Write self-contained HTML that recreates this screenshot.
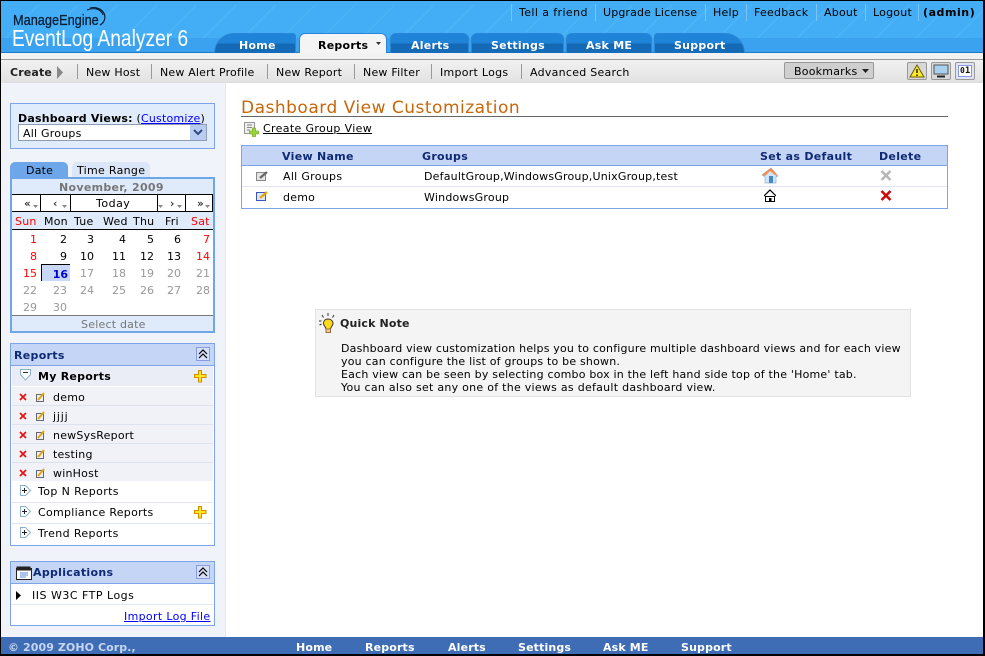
<!DOCTYPE html>
<html><head><meta charset="utf-8"><title>EventLog Analyzer</title>
<style>
html,body{margin:0;padding:0;background:#fff}
#p{position:relative;width:985px;height:656px;overflow:hidden;background:#fff;font:11px "DejaVu Sans","Liberation Sans",sans-serif;color:#000;letter-spacing:.22px}
#p div,#p span,#p a,#p svg{position:absolute;white-space:nowrap}
#p a{color:#00f;text-decoration:underline}
.t{line-height:14px;height:14px;margin-top:1px}
.b{font-weight:bold;letter-spacing:.15px}
.tab{top:33px;height:20px;background:linear-gradient(#1f84d8,#1f84d8 50%,#1468b4 51%,#156cb8);border-radius:6px 6px 0 0;border:1px solid #2a86d4;border-bottom:0;box-sizing:border-box}
.tl{top:39px;color:#fff;font-weight:bold;line-height:14px;letter-spacing:.25px}
.sep{width:1px;background:#999}
.hs{width:1px;top:4px;height:17px;background:#7cc4f6}
.pn{background:#fff;border:1px solid #7ea4e8;box-sizing:border-box}
.hd{background:#c4d5f5}
.nv{color:#0f2a75;font-weight:bold;letter-spacing:.3px}
.cal{line-height:14px;text-align:right;width:24px;margin-top:1px;letter-spacing:0}
.g{color:#999}.r{color:#f00}
.foot{top:641px;color:#fff;font-weight:bold;line-height:14px;letter-spacing:.15px}
</style></head><body><div id="p">

<!-- header -->
<div style="left:0;top:0;width:985px;height:53px;background:#43aef6"></div>
<div style="left:0;top:5px;width:985px;height:33px;background:repeating-linear-gradient(135deg,#43aef6 0 26px,#4bb3f7 26px 28px)"></div>
<div style="left:0;top:38px;width:985px;height:15px;background:#3aa2ee"></div>
<div style="left:0;top:52px;width:985px;height:1px;background:#1b7bcb"></div>
<div style="left:0;top:53px;width:985px;height:6px;background:#f2f2f2"></div>
<div style="left:0;top:59px;width:985px;height:1px;background:#9a9a9a"></div>
<div style="left:0;top:60px;width:985px;height:23px;background:linear-gradient(#f1f1f1,#e2e2e2)"></div>
<div style="left:0;top:82px;width:985px;height:1px;background:#dcdcdc"></div>

<span style="left:13px;top:12px;font:15px/18px 'Liberation Sans',sans-serif;letter-spacing:0;color:#0a1f38;transform:scaleX(.85);transform-origin:0 0;-webkit-text-stroke:.3px #0a1f38">ManageEngine</span>
<svg style="left:86px;top:6px" width="22" height="22" viewBox="0 0 22 22" fill="none" stroke="#0a1f38"><path d="M1 4C8 1 15 3 17 9" stroke-width="1"/><path d="M4 2C11 0 18 4 19 11" stroke-width="1"/><path d="M10 2C16 3 21 8 18 15 17 17 16 18 14 19" stroke-width="1.2"/></svg>
<span style="left:12px;top:25px;font:23px/27px 'Liberation Sans',sans-serif;letter-spacing:0;color:#fff;transform:scaleX(.835);transform-origin:0 0">EventLog Analyzer 6</span>

<div class="hs" style="left:511px"></div><div class="hs" style="left:595px"></div><div class="hs" style="left:705px"></div><div class="hs" style="left:746px"></div><div class="hs" style="left:816px"></div><div class="hs" style="left:865px"></div><div class="hs" style="left:918px"></div>
<span class="t" style="left:519px;top:5px;letter-spacing:.4px">Tell a friend</span>
<span class="t" style="left:603px;top:5px;letter-spacing:.14px">Upgrade License</span>
<span class="t" style="left:713px;top:5px">Help</span>
<span class="t" style="left:754px;top:5px;letter-spacing:.25px">Feedback</span>
<span class="t" style="left:824px;top:5px">About</span>
<span class="t" style="left:873px;top:5px">Logout</span>
<span class="t b" style="left:923px;top:5px;letter-spacing:.55px">(admin)</span>

<!-- tabs -->
<div class="tab" style="left:214px;width:82px;border-radius:36px 6px 0 0"></div>
<div class="tab" style="left:299px;width:88px;background:#f4f4f4;border-color:#2a86d4"></div>
<div class="tab" style="left:390px;width:79px"></div>
<div class="tab" style="left:471px;width:93px"></div>
<div class="tab" style="left:566px;width:86px"></div>
<div class="tab" style="left:654px;width:91px;border-radius:6px 36px 0 0"></div>
<span class="tl" style="left:239px">Home</span>
<span class="tl" style="left:318px;color:#000">Reports</span>
<svg style="left:376px;top:42px" width="6" height="4"><path d="M0 0h5L2.500 3z" fill="#333"/></svg>
<span class="tl" style="left:411px">Alerts</span>
<span class="tl" style="left:491px">Settings</span>
<span class="tl" style="left:586px">Ask ME</span>
<span class="tl" style="left:674px">Support</span>

<!-- toolbar -->
<span class="t b" style="left:10px;top:65px;color:#222">Create</span>
<svg style="left:57px;top:66px" width="7" height="13"><path d="M0 0L6 6.500 0 13z" fill="#888"/></svg>
<div class="sep" style="left:77px;top:64px;height:15px"></div>
<div class="sep" style="left:151px;top:64px;height:15px"></div>
<div class="sep" style="left:267px;top:64px;height:15px"></div>
<div class="sep" style="left:354px;top:64px;height:15px"></div>
<div class="sep" style="left:431px;top:64px;height:15px"></div>
<div class="sep" style="left:521px;top:64px;height:15px"></div>
<span class="t" style="left:86px;top:65px">New Host</span>
<span class="t" style="left:160px;top:65px;letter-spacing:.18px">New Alert Profile</span>
<span class="t" style="left:276px;top:65px">New Report</span>
<span class="t" style="left:363px;top:65px">New Filter</span>
<span class="t" style="left:440px;top:65px;letter-spacing:.27px">Import Logs</span>
<span class="t" style="left:530px;top:65px;letter-spacing:.27px">Advanced Search</span>
<div style="left:784px;top:62px;width:90px;height:17px;box-sizing:border-box;background:#cfcfcf;border:1px solid #999;border-radius:2px"></div>
<span class="t" style="left:794px;top:64px">Bookmarks</span>
<svg style="left:862px;top:69px" width="7" height="4"><path d="M0 0h7L3.500 4z" fill="#222"/></svg>

<div style="left:907px;top:62px;width:20px;height:18px;box-sizing:border-box;background:#d8d8d8;border:1px solid #999;border-radius:2px"></div>
<svg style="left:909px;top:64px" width="16" height="14"><path d="M8 1L15 13H1z" fill="#fce928" stroke="#6b5a00"/><path d="M8 5v4M8 10.500v1.500" stroke="#222" stroke-width="1.500"/></svg>
<div style="left:931px;top:62px;width:20px;height:18px;box-sizing:border-box;background:#d8d8d8;border:1px solid #999;border-radius:2px"></div>
<svg style="left:933px;top:64px" width="16" height="14"><rect x="1" y="1" width="14" height="9" fill="#a8d0f0" stroke="#555"/><path d="M4 12.500h8" stroke="#222" stroke-width="2"/></svg>
<div style="left:955px;top:62px;width:20px;height:18px;box-sizing:border-box;background:#dfe3f5;border:1px solid #999;border-radius:2px"></div>
<div style="left:958px;top:65px;width:14px;height:12px;box-sizing:border-box;background:#fff;border:1px solid #8a98e0"></div>
<span style="left:960px;top:66px;font:bold 8px/10px 'DejaVu Sans Mono',monospace;letter-spacing:0;color:#111">0<span style="position:static;font-size:9px">1</span></span>

<!-- sidebar -->
<div style="left:0;top:83px;width:225px;height:554px;background:#f0f4fa;border-right:1px solid #e3e9f6"></div>

<div style="left:10px;top:103px;width:205px;height:46px;box-sizing:border-box;background:#e0ebfb;border:1px solid #7ea4e8"></div>
<span class="t" style="left:18px;top:111px;letter-spacing:.2px"><b>Dashboard Views:</b> (<a style="position:static">Customize</a>)</span>
<div style="left:18px;top:124px;width:189px;height:17px;box-sizing:border-box;background:#fff;border:1px solid #8e9bb5"></div>
<span class="t" style="left:23px;top:126px">All Groups</span>
<div style="left:190px;top:125px;width:16px;height:15px;background:#b9ccf2"></div>
<svg style="left:193px;top:129px" width="10" height="7"><path d="M1 1l4 4 4-4" fill="none" stroke="#334a80" stroke-width="2"/></svg>

<!-- calendar -->
<div style="left:10px;top:162px;width:58px;height:16px;background:#6ea6ea;border-radius:5px 5px 0 0"></div>
<div style="left:72px;top:162px;width:78px;height:16px;background:#dbe6f8;border-radius:5px 5px 0 0"></div>
<span class="t" style="left:26px;top:163px">Date</span>
<span class="t" style="left:77px;top:163px;letter-spacing:.3px">Time Range</span>
<div style="left:10px;top:177px;width:205px;height:156px;box-sizing:border-box;background:#fff;border:2px solid #6ea6ea"></div>
<div style="left:12px;top:179px;width:201px;height:15px;background:#dfeafb;border-bottom:1px solid #000"></div>
<span class="t b" style="left:59px;top:180px;color:#777;letter-spacing:.3px">November, 2009</span>
<div style="left:12px;top:195px;width:201px;height:16px;background:#fff"></div>
<div style="left:40px;top:195px;width:1px;height:17px;background:#000"></div>
<div style="left:70px;top:195px;width:1px;height:17px;background:#000"></div>
<div style="left:157px;top:195px;width:1px;height:17px;background:#000"></div>
<div style="left:185px;top:195px;width:1px;height:17px;background:#000"></div>
<div style="left:212px;top:195px;width:1px;height:17px;background:#000"></div>
<div style="left:12px;top:211px;width:201px;height:1px;background:#000"></div>
<span class="t" style="left:24px;top:196px">«</span><span class="t" style="left:53px;top:196px">‹</span><span class="t" style="left:96px;top:196px;letter-spacing:.5px">Today</span><span class="t" style="left:170px;top:196px">›</span><span class="t" style="left:197px;top:196px">»</span>
<svg style="left:33px;top:205px" width="180" height="4" fill="#888"><path d="M0 0h5L2.500 3zM29 0h5l-2.500 3zM125 0h5l-2.500 3zM172 0h5l-2.500 3zM144 0h5l-2.500 3z"/></svg>
<div style="left:12px;top:212px;width:201px;height:17px;background:#dfeafb;border-bottom:1px solid #000"></div>
<span class="t r" style="left:15px;top:214px">Sun</span><span class="t" style="left:44px;top:214px">Mon</span><span class="t" style="left:74px;top:214px">Tue</span><span class="t" style="left:103px;top:214px">Wed</span><span class="t" style="left:133px;top:214px">Thu</span><span class="t" style="left:165px;top:214px">Fri</span><span class="t r" style="left:191px;top:214px">Sat</span>

<span class="cal r" style="left:13px;top:232px">1</span><span class="cal" style="left:43px;top:232px">2</span><span class="cal" style="left:70px;top:232px">3</span><span class="cal" style="left:102px;top:232px">4</span><span class="cal" style="left:130px;top:232px">5</span><span class="cal" style="left:157px;top:232px">6</span><span class="cal r" style="left:186px;top:232px">7</span>
<span class="cal r" style="left:13px;top:249px">8</span><span class="cal" style="left:43px;top:249px">9</span><span class="cal" style="left:70px;top:249px">10</span><span class="cal" style="left:102px;top:249px">11</span><span class="cal" style="left:130px;top:249px">12</span><span class="cal" style="left:157px;top:249px">13</span><span class="cal r" style="left:186px;top:249px">14</span>
<div style="left:41px;top:264px;width:29px;height:17px;box-sizing:border-box;background:#c9d8f8;border-left:1px solid #000;border-top:1px solid #000"></div>
<span class="cal r" style="left:13px;top:266px">15</span><span class="cal b" style="left:44px;top:267px;color:#00c">16</span><span class="cal g" style="left:70px;top:266px">17</span><span class="cal g" style="left:102px;top:266px">18</span><span class="cal g" style="left:130px;top:266px">19</span><span class="cal g" style="left:157px;top:266px">20</span><span class="cal g" style="left:186px;top:266px">21</span>
<span class="cal g" style="left:13px;top:283px">22</span><span class="cal g" style="left:43px;top:283px">23</span><span class="cal g" style="left:70px;top:283px">24</span><span class="cal g" style="left:102px;top:283px">25</span><span class="cal g" style="left:130px;top:283px">26</span><span class="cal g" style="left:157px;top:283px">27</span><span class="cal g" style="left:186px;top:283px">28</span>
<span class="cal g" style="left:13px;top:300px">29</span><span class="cal g" style="left:43px;top:300px">30</span>
<div style="left:12px;top:315px;width:201px;height:1px;background:#777"></div>
<div style="left:12px;top:316px;width:201px;height:15px;background:#dfeafb"></div>
<span class="t" style="left:81px;top:317px;color:#777">Select date</span>

<!-- reports -->
<div class="pn" style="left:10px;top:343px;width:205px;height:203px"></div>
<div class="hd" style="left:11px;top:344px;width:203px;height:21px;border-bottom:1px solid #7ea4e8"></div>
<span class="t nv" style="left:14px;top:348px">Reports</span>
<div style="left:196px;top:347px;width:14px;height:14px;box-sizing:border-box;background:#d5e0f8;border:1px solid #8a9be0"></div>
<svg style="left:198px;top:349px" width="10" height="10" fill="none" stroke="#000" stroke-width="1.200"><path d="M1 5l4-4 4 4M1 9l4-4 4 4"/></svg>
<div style="left:12px;top:366px;width:201px;height:20px;background:#eaedf5"></div>
<svg style="left:20px;top:369px" width="12" height="12" fill="#fff" stroke="#8ab0cc"><path d="M.5.500h10v5L5.500 11 .5 5.500z"/><path d="M3 3.500h5" stroke="#333"/></svg>
<span class="t b" style="left:38px;top:369px;letter-spacing:.25px">My Reports</span>
<svg style="left:194px;top:370px" width="13" height="13"><path d="M4.500.5h3v4h4.500v3H7.500v4.500h-3V7.500H.5v-3h4z" fill="#ffe81a" stroke="#d28a00"/></svg>

<div style="left:12px;top:387px;width:201px;height:18px;background:#f0f2f7;border-bottom:1px solid #dde3ee"></div>
<div style="left:12px;top:406px;width:201px;height:18px;background:#f0f2f7;border-bottom:1px solid #dde3ee"></div>
<div style="left:12px;top:425px;width:201px;height:18px;background:#f0f2f7;border-bottom:1px solid #dde3ee"></div>
<div style="left:12px;top:444px;width:201px;height:18px;background:#f0f2f7;border-bottom:1px solid #dde3ee"></div>
<div style="left:12px;top:463px;width:201px;height:18px;background:#f0f2f7"></div>

<svg style="left:19px;top:392px" width="9" height="95" fill="none" stroke="#e81010" stroke-width="1.700"><path d="M1 2l6 6M7 2l-6 6M1 21l6 6M7 21l-6 6M1 40l6 6M7 40l-6 6M1 59l6 6M7 59l-6 6M1 78l6 6M7 78l-6 6"/></svg>
<svg style="left:36px;top:392px" width="10" height="90"><g id="pe"><rect x=".5" y="2.500" width="7" height="7" fill="#eef" stroke="#667"/><path d="M2 8L8 1" stroke="#e0a800" stroke-width="2"/></g><use href="#pe" y="19"/><use href="#pe" y="38"/><use href="#pe" y="57"/><use href="#pe" y="76"/></svg>
<span class="t" style="left:53px;top:390px">demo</span>
<span class="t" style="left:53px;top:409px;letter-spacing:.8px">jjjj</span>
<span class="t" style="left:53px;top:428px">newSysReport</span>
<span class="t" style="left:53px;top:447px">testing</span>
<span class="t" style="left:53px;top:466px">winHost</span>

<div style="left:12px;top:502px;width:201px;height:1px;background:#dfe6f3"></div>
<div style="left:12px;top:523px;width:201px;height:1px;background:#dfe6f3"></div>
<svg style="left:20px;top:485px" width="12" height="54" fill="#fff" stroke="#8ab0cc"><g id="ex"><path d="M.5.500h5L10.500 5.500 5.500 10.500h-5z"/><path d="M2 5.500h5M4.500 3v5" stroke="#222"/></g><use href="#ex" y="21"/><use href="#ex" y="42"/></svg>
<span class="t" style="left:38px;top:484px;letter-spacing:.38px">Top N Reports</span>
<span class="t" style="left:38px;top:505px;letter-spacing:.28px">Compliance Reports</span>
<span class="t" style="left:38px;top:526px;letter-spacing:.38px">Trend Reports</span>
<svg style="left:194px;top:506px" width="13" height="13"><path d="M4.500.5h3v4h4.500v3H7.500v4.500h-3V7.500H.5v-3h4z" fill="#ffe81a" stroke="#d28a00"/></svg>

<!-- applications -->
<div class="pn" style="left:10px;top:561px;width:205px;height:65px"></div>
<div class="hd" style="left:11px;top:562px;width:203px;height:21px;border-bottom:1px solid #7ea4e8"></div>
<svg style="left:16px;top:566px" width="16" height="14"><rect x=".5" y=".5" width="14" height="4" fill="#222"/><rect x=".5" y="2.500" width="15" height="11" fill="#fff" stroke="#222"/><rect x=".5" y="2.500" width="15" height="2" fill="#222"/><path d="M4 7h8M4 9h8M4 11h6" stroke="#5a8ae0"/></svg>
<span class="t nv" style="left:33px;top:565px">Applications</span>
<div style="left:196px;top:565px;width:14px;height:14px;box-sizing:border-box;background:#d5e0f8;border:1px solid #8a9be0"></div>
<svg style="left:198px;top:567px" width="10" height="10" fill="none" stroke="#000" stroke-width="1.200"><path d="M1 5l4-4 4 4M1 9l4-4 4 4"/></svg>
<svg style="left:16px;top:591px" width="5" height="9"><path d="M0 0l5 4.500L0 9z" fill="#000"/></svg>
<span class="t" style="left:32px;top:588px;letter-spacing:.5px">IIS W3C FTP Logs</span>
<div style="left:11px;top:604px;width:203px;height:1px;background:#e3e8f2"></div>
<a class="t" style="left:124px;top:609px;letter-spacing:.33px">Import Log File</a>

<!-- main -->
<span style="left:241px;top:97px;font-size:17px;line-height:22px;color:#c8660a;letter-spacing:.5px">Dashboard View Customization</span>
<div style="left:241px;top:116px;width:707px;height:1px;background:#666"></div>
<svg style="left:244px;top:122px" width="16" height="15"><rect x=".5" y=".5" width="10" height="11" fill="#eee" stroke="#999"/><path d="M3 3h5M3 5.500h5M3 8h3" stroke="#888"/><path d="M8.500 6h3v3h3v3h-3v3h-3v-3h-3V9h3z" fill="#9cd43c" stroke="#5f9a18" stroke-width=".6"/></svg>
<span class="t" style="left:263px;top:121px;text-decoration:underline;letter-spacing:.35px">Create Group View</span>

<div class="pn" style="left:241px;top:145px;width:707px;height:64px"></div>
<div class="hd" style="left:242px;top:146px;width:705px;height:19px;border-bottom:1px solid #7ea4e8"></div>
<span class="t nv" style="left:282px;top:149px">View Name</span>
<span class="t nv" style="left:422px;top:149px">Groups</span>
<span class="t nv" style="left:760px;top:149px">Set as Default</span>
<span class="t nv" style="left:879px;top:149px">Delete</span>
<div style="left:242px;top:186px;width:705px;height:1px;background:#dfe6f3"></div>
<svg style="left:256px;top:170px" width="13" height="12"><rect x=".5" y="2.500" width="9" height="8" fill="#e4e4e4" stroke="#888"/><path d="M4 8l7-6" stroke="#666" stroke-width="2.200"/></svg>
<svg style="left:256px;top:190px" width="13" height="12"><rect x=".5" y="2.500" width="9" height="8" fill="#dde6ff" stroke="#3a55c8"/><path d="M4 8l7-6" stroke="#e8a400" stroke-width="2.200"/></svg>
<span class="t" style="left:283px;top:169px;letter-spacing:.3px">All Groups</span>
<span class="t" style="left:283px;top:190px">demo</span>
<span class="t" style="left:424px;top:169px;letter-spacing:.2px">DefaultGroup,WindowsGroup,UnixGroup,test</span>
<span class="t" style="left:424px;top:190px">WindowsGroup</span>
<svg style="left:761px;top:167px" width="18" height="17"><path d="M1 8L10 1l7 8-2 1v6H4V10z" fill="#cfe6f6" stroke="#8cb4cc" stroke-width=".7"/><path d="M1 8L10 1l7 8-3-1-5-4-5 5z" fill="#f58a50"/><rect x="8" y="9" width="4" height="7" fill="#4a86c4"/></svg>
<svg style="left:764px;top:189px" width="12" height="14"><path d="M0 7L6 1l6 6" fill="none" stroke="#000" stroke-width="1.200"/><path d="M1.500 7.500h9v5h-9z" fill="#fff" stroke="#000"/><rect x="5" y="9" width="2.500" height="4" fill="#000"/></svg>
<svg style="left:880px;top:170px" width="12" height="11" fill="none" stroke="#b8b8b8" stroke-width="2.600"><path d="M1.500 1l9 9M10.500 1l-9 9"/></svg>
<svg style="left:880px;top:190px" width="12" height="11" fill="none" stroke="#cc0a0a" stroke-width="2.600"><path d="M1.500 1l9 9M10.500 1l-9 9"/></svg>

<!-- quick note -->
<div style="left:315px;top:309px;width:596px;height:88px;box-sizing:border-box;background:#f4f4f4;border:1px solid #e2e2e2"></div>
<svg style="left:319px;top:313px" width="18" height="22"><path d="M9 6c3 0 5 2 5 4.500 0 2-2 3-2.500 5.500h-4.500c-.5-2.500-2.500-3.500-2.500-5.500C4.500 8 6 6 9 6z" fill="#ffd91a" stroke="#333"/><rect x="7" y="16" width="4.500" height="3.500" fill="#e8d0a0" stroke="#a07040"/><path d="M3 2l1.500 2.500M9 0v3M15 2l-1.500 2.500M0 8h2.500M.5 12l2-1" stroke="#333"/></svg>
<span class="t b" style="left:340px;top:316px;color:#222">Quick Note</span>
<span class="t" style="left:341px;top:341px;letter-spacing:.19px">Dashboard view customization helps you to configure multiple dashboard views and for each view</span>
<span class="t" style="left:341px;top:354px;letter-spacing:.2px">you can configure the list of groups to be shown.</span>
<span class="t" style="left:341px;top:367px;letter-spacing:.2px">Each view can be seen by selecting combo box in the left hand side top of the 'Home' tab.</span>
<span class="t" style="left:341px;top:380px;letter-spacing:.27px">You can also set any one of the views as default dashboard view.</span>

<!-- footer -->
<div style="left:0;top:637px;width:985px;height:19px;background:#3e6db5"></div>
<span class="foot" style="left:8px;color:#c6d6f2;letter-spacing:.08px">© 2009 ZOHO Corp.,</span>
<span class="foot" style="left:296px">Home</span>
<span class="foot" style="left:365px">Reports</span>
<span class="foot" style="left:448px">Alerts</span>
<span class="foot" style="left:518px">Settings</span>
<span class="foot" style="left:603px">Ask ME</span>
<span class="foot" style="left:681px">Support</span>

<!-- window frame -->
<div style="left:0;top:0;width:985px;height:1px;background:#000"></div>
<div style="left:0;top:0;width:1px;height:656px;background:#000"></div>
<div style="left:983px;top:0;width:2px;height:656px;background:#000"></div>
<div style="left:0;top:654px;width:985px;height:2px;background:#000"></div>
</div></body></html>
